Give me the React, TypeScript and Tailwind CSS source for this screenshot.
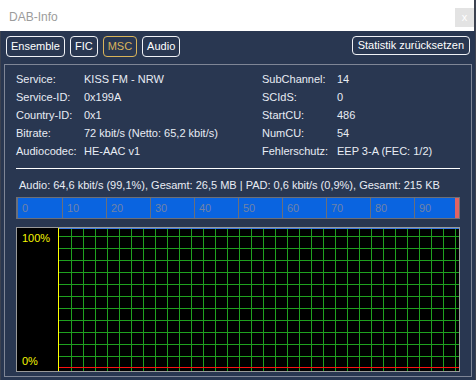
import React from "react"

const rowsLeft: [string, string][] = [
  ["Service:", "KISS FM - NRW"],
  ["Service-ID:", "0x199A"],
  ["Country-ID:", "0x1"],
  ["Bitrate:", "72 kbit/s (Netto: 65,2 kbit/s)"],
  ["Audiocodec:", "HE-AAC v1"],
]

const rowsRight: [string, string][] = [
  ["SubChannel:", "14"],
  ["SCIdS:", "0"],
  ["StartCU:", "486"],
  ["NumCU:", "54"],
  ["Fehlerschutz:", "EEP 3-A (FEC: 1/2)"],
]

const tabs = ["Ensemble", "FIC", "MSC", "Audio"]

function Grid() {
  const vx: number[] = []
  for (let x = 12; x <= 396; x += 12) vx.push(x)
  const hy: number[] = []
  for (let y = 8; y <= 128; y += 12) hy.push(y)
  return (
    <svg width="400" height="143" className="block bg-black shrink-0" shapeRendering="crispEdges">
      {vx.map((x) => (
        <line key={"v" + x} x1={x + 0.5} y1={0} x2={x + 0.5} y2={143} stroke="#1fa01f" strokeWidth="1" />
      ))}
      {hy.map((y) => (
        <line key={"h" + y} x1={0} y1={y + 0.5} x2={400} y2={y + 0.5} stroke="#1fa01f" strokeWidth="1" />
      ))}
      <line x1={0} y1={0.5} x2={400} y2={0.5} stroke="#3b7be0" strokeWidth="1" />
      <line x1={0} y1={139.5} x2={400} y2={139.5} stroke="#ff1010" strokeWidth="1" />
    </svg>
  )
}

export default function App() {
  return (
    <div
      className="w-[476px] h-[380px] overflow-hidden flex flex-col bg-[#293751] text-[11px] text-[#e8ecf4]"
      style={{ fontFamily: '"Liberation Sans", Arial, sans-serif' }}
    >
      {/* title bar */}
      <div className="h-[31px] bg-white flex items-start justify-between shrink-0 border-r-2 border-[#3c4250]">
        <span className="pl-[9px] pt-[8px] text-[12px] text-[#9c9c9c]">DAB-Info</span>
        <div className="mt-[8px] w-[19px] h-[19px] bg-[#e3e3e3] flex items-center justify-center text-[11px] leading-none text-white">
          x
        </div>
      </div>

      <div className="flex-1 flex flex-col px-[3px] border-l border-r border-[#3c4250]">
        {/* tabs */}
        <div className="flex items-start justify-between mt-[5px] px-[2px]">
          <div className="flex gap-[5px]">
            {tabs.map((t) => (
              <button
                key={t}
                className={
                  "h-[21px] px-[4px] rounded-[4px] border leading-none " +
                  (t === "MSC" ? "border-[#d9b45a] text-[#d9b45a]" : "border-[#f0f2f6] text-white")
                }
              >
                {t}
              </button>
            ))}
          </div>
          <button className="h-[19px] px-[5px] rounded-[4px] border border-[#f0f2f6] text-white leading-none">
            Statistik zurücksetzen
          </button>
        </div>

        {/* group box */}
        <div className="mt-[7px] border border-[#7f8696] flex-1 mb-[3px] px-[11px] pt-[5px]">
          <div className="flex">
            <div className="w-[246px] flex flex-col">
              {rowsLeft.map(([k, v]) => (
                <div key={k} className="flex h-[18px] items-center whitespace-nowrap">
                  <span className="w-[68px] shrink-0">{k}</span>
                  <span>{v}</span>
                </div>
              ))}
            </div>
            <div className="flex flex-col">
              {rowsRight.map(([k, v]) => (
                <div key={k} className="flex h-[18px] items-center whitespace-nowrap">
                  <span className="w-[75px] shrink-0">{k}</span>
                  <span>{v}</span>
                </div>
              ))}
            </div>
          </div>

          <div className="mt-[8px] h-px bg-white" />

          <div className="mt-[7px] h-[18px] flex items-center pl-[3px] whitespace-nowrap">
            Audio: 64,6 kbit/s (99,1%), Gesamt: 26,5 MB | PAD: 0,6 kbit/s (0,9%), Gesamt: 215 KB
          </div>

          {/* progress bar */}
          <div className="mt-[3px] h-[22px] border border-[#6c6f78] border-l-2 bg-[#0a64e0] flex relative">
            {Array.from({ length: 10 }).map((_, i) => (
              <div
                key={i}
                className={"w-[44px] shrink-0 h-full flex items-center pl-[4px] " + (i > 0 ? "border-l border-[#6c6f78]" : "")}
              >
                <span className="text-[#6f83a8] leading-none">{i * 10}</span>
              </div>
            ))}
            <div className="absolute right-0 top-0 bottom-0 w-[4px] bg-[#e06464]" />
          </div>

          {/* chart */}
          <div className="mt-[8px] h-[145px] border border-[#9a9a9a] flex bg-black">
            <div className="w-[41px] shrink-0 flex flex-col justify-between text-[#f5f500] text-[11px] leading-none pl-[5px] pt-[5px] pb-[4px]">
              <span>100%</span>
              <span>0%</span>
            </div>
            <div className="w-px shrink-0 bg-[#ffff00]" />
            <Grid />
          </div>
        </div>
      </div>
    </div>
  )
}
